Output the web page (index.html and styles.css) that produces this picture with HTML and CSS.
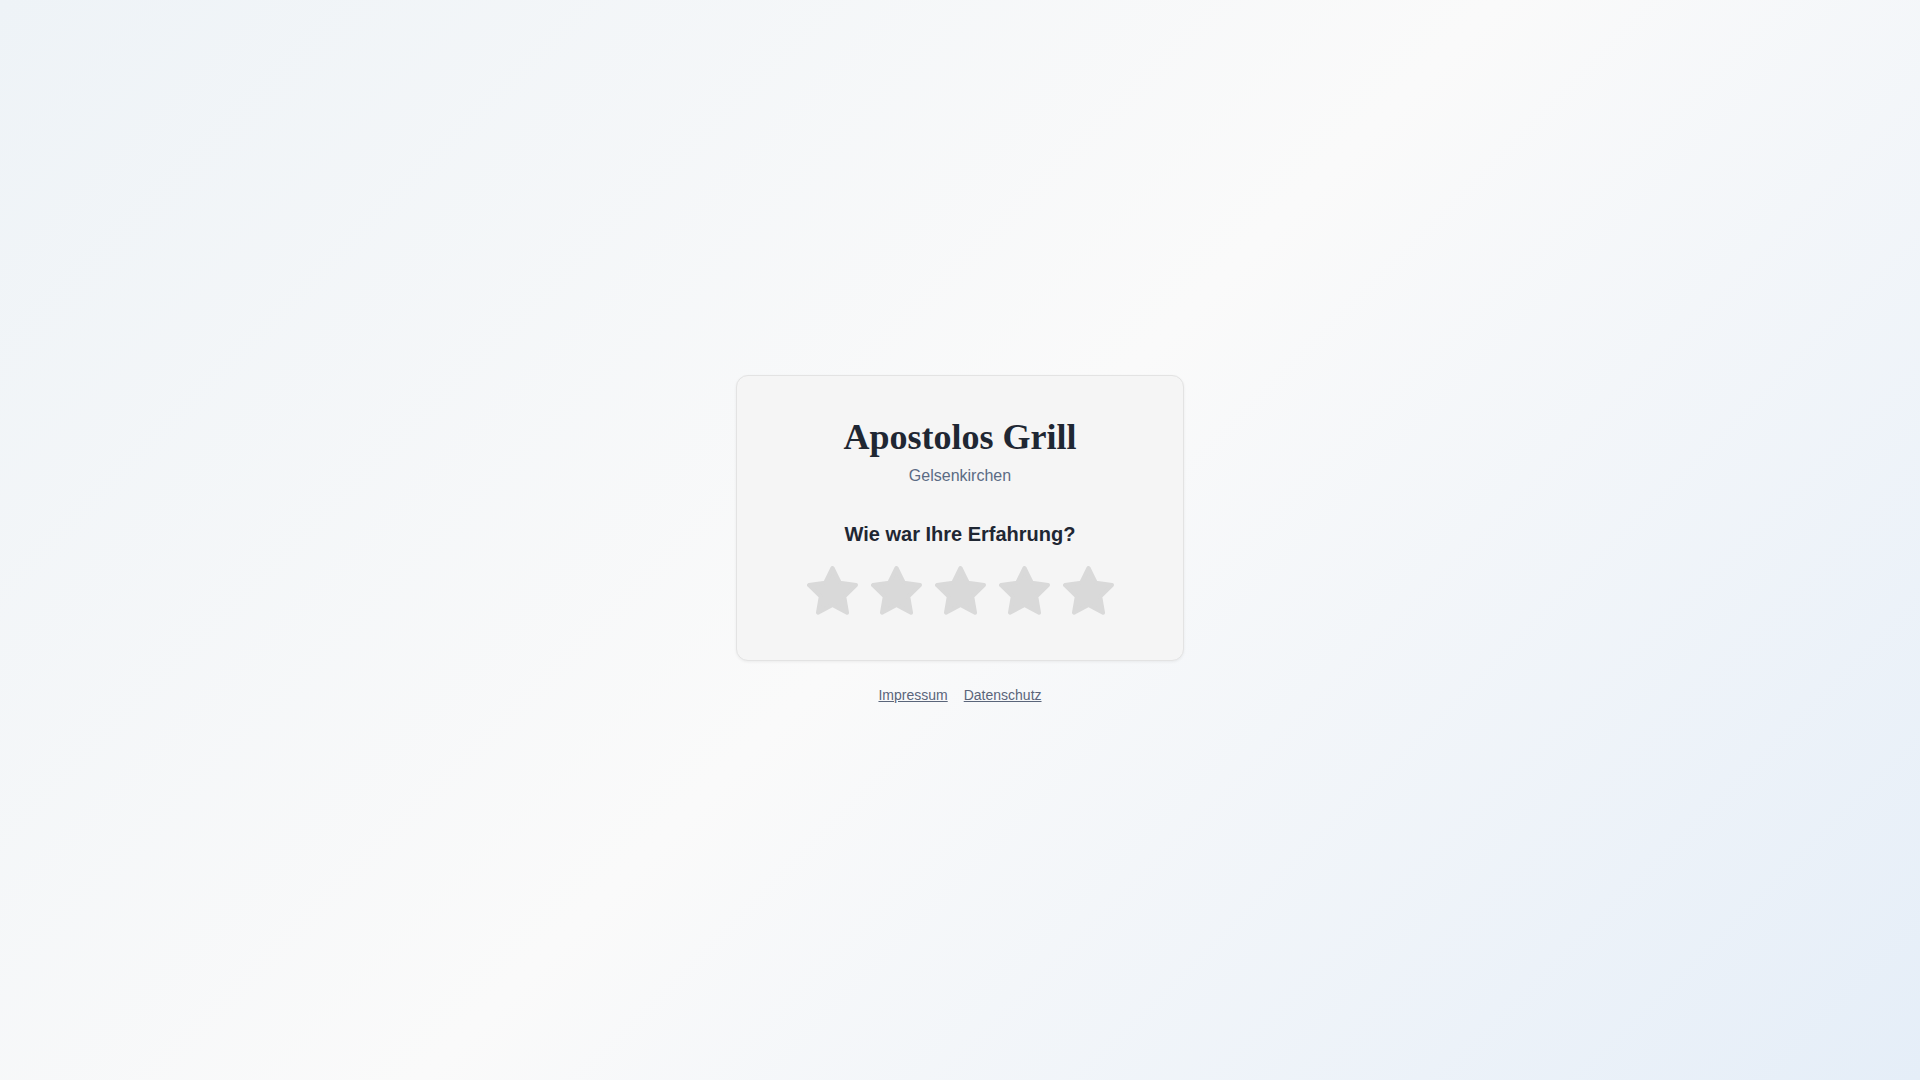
FILE: index.html
```html
<!DOCTYPE html>
<html lang="de">
<head>
<meta charset="utf-8">
<title>Apostolos Grill – Bewertung</title>
<link rel="stylesheet" href="styles.css">
</head>
<body>
<main class="page">
  <div class="wrap">
    <section class="card">
      <h1 class="title">Apostolos Grill</h1>
      <p class="city">Gelsenkirchen</p>
      <h2 class="question">Wie war Ihre Erfahrung?</h2>
      <div class="stars">
        <svg class="star" viewBox="0 0 51 49"><polygon points="25.5,2 32.76,16.71 48.99,19.07 37.24,30.52 40.02,46.68 25.5,39.05 10.98,46.68 13.76,30.52 2.01,19.07 18.24,16.71"/></svg>
        <svg class="star" viewBox="0 0 51 49"><polygon points="25.5,2 32.76,16.71 48.99,19.07 37.24,30.52 40.02,46.68 25.5,39.05 10.98,46.68 13.76,30.52 2.01,19.07 18.24,16.71"/></svg>
        <svg class="star" viewBox="0 0 51 49"><polygon points="25.5,2 32.76,16.71 48.99,19.07 37.24,30.52 40.02,46.68 25.5,39.05 10.98,46.68 13.76,30.52 2.01,19.07 18.24,16.71"/></svg>
        <svg class="star" viewBox="0 0 51 49"><polygon points="25.5,2 32.76,16.71 48.99,19.07 37.24,30.52 40.02,46.68 25.5,39.05 10.98,46.68 13.76,30.52 2.01,19.07 18.24,16.71"/></svg>
        <svg class="star" viewBox="0 0 51 49"><polygon points="25.5,2 32.76,16.71 48.99,19.07 37.24,30.52 40.02,46.68 25.5,39.05 10.98,46.68 13.76,30.52 2.01,19.07 18.24,16.71"/></svg>
      </div>
    </section>
    <nav class="links">
      <a href="#">Impressum</a>
      <a href="#">Datenschutz</a>
    </nav>
  </div>
</main>
</body>
</html>
```

FILE: styles.css
```css
html, body {
  margin: 0;
  padding: 0;
  height: 100%;
}

body {
  font-family: "Liberation Sans", Arial, sans-serif;
  background: linear-gradient(135deg, #eef3f7 0%, #fafafa 50%, #e5eef8 100%);
  color: #1f2733;
}

.page {
  min-height: 100vh;
  display: flex;
  align-items: center;
  justify-content: center;
}

.wrap {
  display: flex;
  flex-direction: column;
  align-items: center;
}

.card {
  width: 366px;
  padding: 40px 40px 45px;
  background: #f5f5f5;
  border: 1px solid #e3e3e3;
  border-radius: 12px;
  box-shadow: 0 1px 3px rgba(0, 0, 0, 0.06);
  text-align: center;
}

.title {
  margin: 0;
  font-family: "Liberation Serif", "Times New Roman", serif;
  font-size: 36px;
  line-height: 1.2;
  font-weight: 700;
  color: #1f2733;
}

.city {
  margin: 4px 0 0;
  font-size: 16px;
  line-height: 24px;
  color: #5b6b84;
}

.question {
  margin: 32px 0 0;
  font-size: 20px;
  line-height: 28px;
  font-weight: 700;
  color: #1f2733;
}

.stars {
  margin-top: 18px;
  display: flex;
  justify-content: center;
  gap: 13px;
}

.star {
  display: block;
  width: 51px;
  height: 49px;
}

.star polygon {
  fill: #d9d9d9;
  stroke: #d9d9d9;
  stroke-width: 4;
  stroke-linejoin: round;
}

.links {
  margin-top: 24px;
  display: flex;
  gap: 16px;
  font-size: 14px;
  line-height: 20px;
}

.links a {
  color: #5a657a;
  text-decoration: underline;
}
```
